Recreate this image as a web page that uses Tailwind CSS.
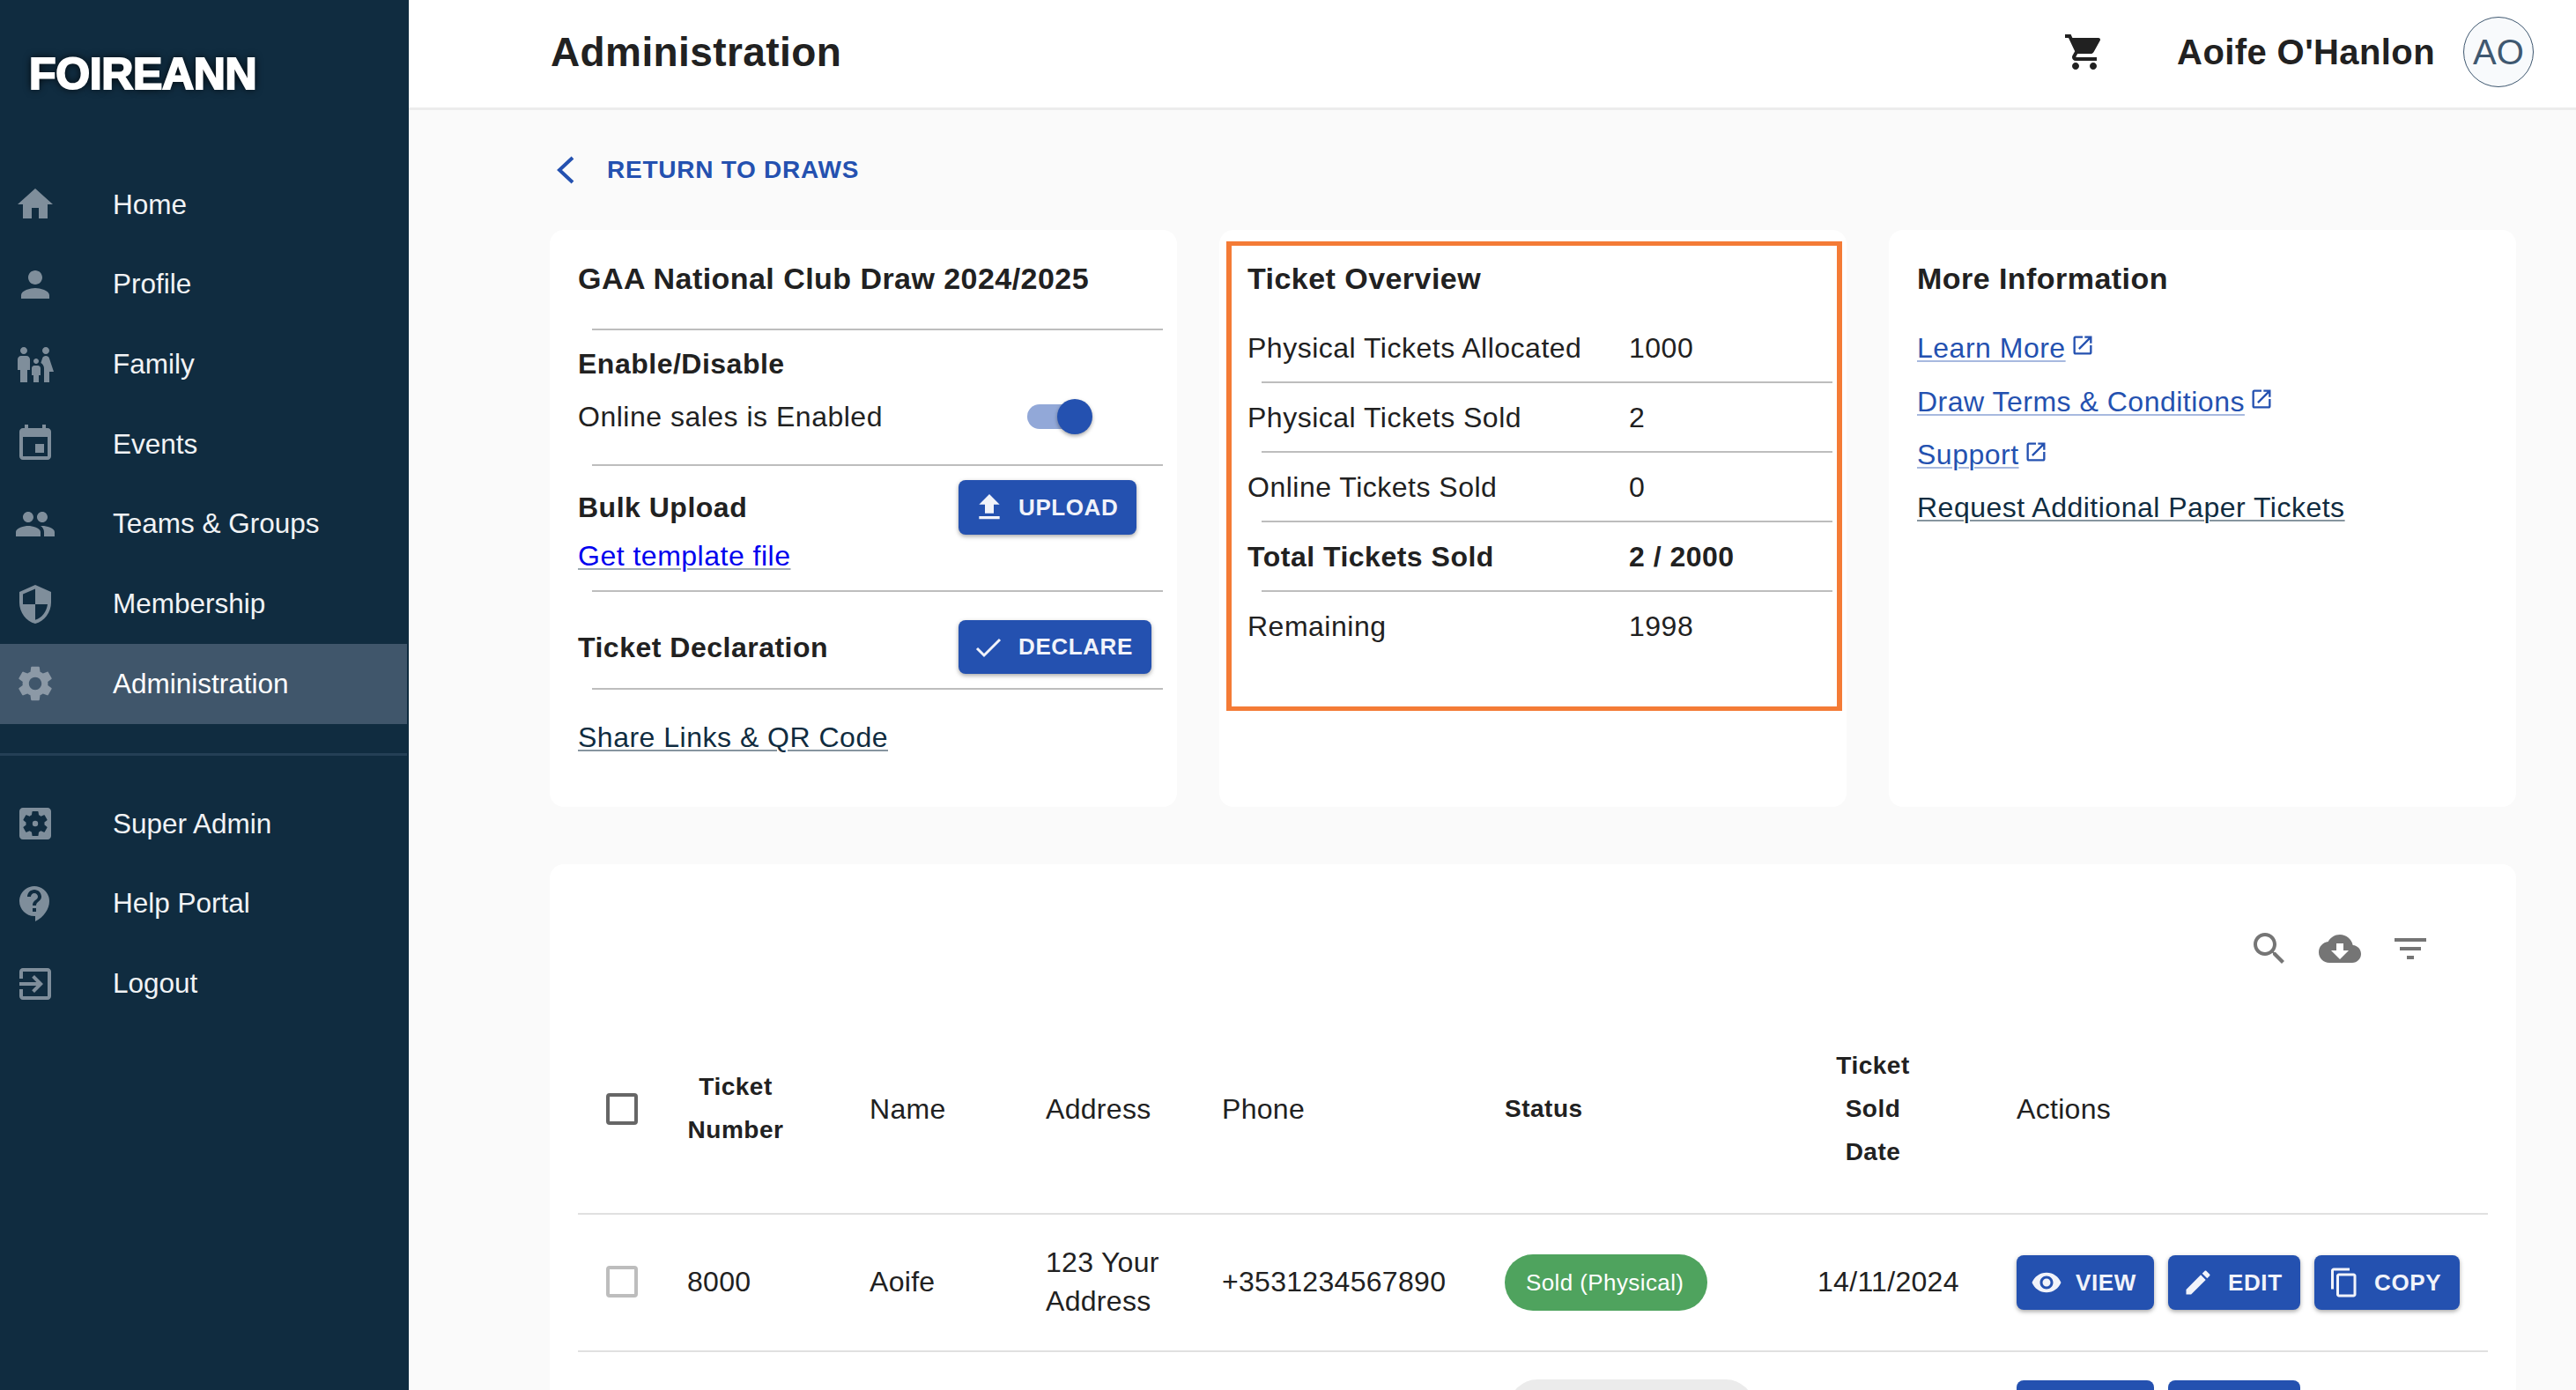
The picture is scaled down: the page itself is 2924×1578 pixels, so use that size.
<!DOCTYPE html>
<html lang="en">
<head>
  <meta charset="UTF-8" />
  <meta name="viewport" content="width=device-width, initial-scale=1.0" />
  <title>Administration</title>
  <script src="https://cdn.jsdelivr.net/npm/@tailwindcss/browser@4"></script>
</head>
<body class="flex h-screen overflow-hidden bg-[#fafafa] font-['Liberation_Sans',Arial,sans-serif] text-[#212121]">

  <!-- sidebar -->
  <aside class="w-[464px] shrink-0 bg-[#102c40] pr-[2px] text-[31.5px] text-[#f1f3f5]">
    <div class="h-[187px] pl-[33px] pt-[54px]">
      <span class="text-[50px] leading-[60px] font-bold tracking-[-0.35px] text-white [-webkit-text-stroke:2px_white] [text-shadow:0_0_10px_#000]">FOIREANN</span>
    </div>
    <nav>
      <a class="flex h-[90.67px] items-center"><svg class="ml-4 mr-16 size-12 fill-[#7f8e9b]" viewBox="0 0 24 24"><path d="M10 20v-6h4v6h5v-8h3L12 3 2 12h3v8z"/></svg>Home</a>
      <a class="flex h-[90.67px] items-center"><svg class="ml-4 mr-16 size-12 fill-[#7f8e9b]" viewBox="0 0 24 24"><path d="M12 12c2.21 0 4-1.79 4-4s-1.79-4-4-4-4 1.79-4 4 1.79 4 4 4zm0 2c-2.67 0-8 1.34-8 4v2h16v-2c0-2.66-5.33-4-8-4z"/></svg>Profile</a>
      <a class="flex h-[90.67px] items-center"><svg class="ml-4 mr-16 size-12 fill-[#7f8e9b]" viewBox="0 0 24 24"><path d="M16 4c0-1.11.89-2 2-2s2 .89 2 2-.89 2-2 2-2-.89-2-2zm4 18v-6h2.5l-2.54-7.63C19.68 7.55 18.92 7 18.06 7h-.12c-.86 0-1.63.55-1.9 1.37l-.86 2.58C16.26 11.55 17 12.68 17 14v8h3zm-7.5-10.5c.83 0 1.5-.67 1.5-1.5s-.67-1.5-1.5-1.5S11 9.17 11 10s.67 1.5 1.5 1.5zM5.5 6c1.11 0 2-.89 2-2s-.89-2-2-2-2 .89-2 2 .89 2 2 2zm2 16v-7H9V9c0-1.1-.9-2-2-2H4c-1.1 0-2 .9-2 2v6h1.5v7h4zm6.5 0v-4h1v-4c0-.82-.68-1.5-1.5-1.5h-2c-.82 0-1.5.68-1.5 1.5v4h1v4h3z"/></svg>Family</a>
      <a class="flex h-[90.67px] items-center"><svg class="ml-4 mr-16 size-12 fill-[#7f8e9b]" viewBox="0 0 24 24"><path d="M17 12h-5v5h5v-5zM16 1v2H8V1H6v2H5c-1.11 0-1.99.9-1.99 2L3 19c0 1.1.89 2 2 2h14c1.1 0 2-.9 2-2V5c0-1.1-.9-2-2-2h-1V1h-2zm3 18H5V8h14v11z"/></svg>Events</a>
      <a class="flex h-[90.67px] items-center"><svg class="ml-4 mr-16 size-12 fill-[#7f8e9b]" viewBox="0 0 24 24"><path d="M16 11c1.66 0 2.99-1.34 2.99-3S17.66 5 16 5c-1.66 0-3 1.34-3 3s1.34 3 3 3zm-8 0c1.66 0 2.99-1.34 2.99-3S9.66 5 8 5C6.34 5 5 6.34 5 8s1.34 3 3 3zm0 2c-2.33 0-7 1.17-7 3.5V19h14v-2.5c0-2.33-4.67-3.5-7-3.5zm8 0c-.29 0-.62.02-.97.05 1.16.84 1.97 1.97 1.97 3.45V19h6v-2.5c0-2.33-4.67-3.5-7-3.5z"/></svg>Teams &amp; Groups</a>
      <a class="flex h-[90.67px] items-center"><svg class="ml-4 mr-16 size-12 fill-[#7f8e9b]" viewBox="0 0 24 24"><path d="M12 1L3 5v6c0 5.55 3.84 10.74 9 12 5.16-1.26 9-6.45 9-12V5l-9-4zm0 10.99h7c-.53 4.12-3.28 7.79-7 8.94V12H5V6.3l7-3.11v8.8z"/></svg>Membership</a>
      <a class="flex h-[91px] items-center bg-[#40566b] text-white"><svg class="ml-4 mr-16 size-12 fill-[#8c99a6]" viewBox="0 0 24 24"><path d="M19.14 12.94c.04-.3.06-.61.06-.94 0-.32-.02-.64-.07-.94l2.03-1.58c.18-.14.23-.41.12-.61l-1.92-3.32c-.12-.22-.37-.29-.59-.22l-2.39.96c-.5-.38-1.03-.7-1.62-.94l-.36-2.54c-.04-.24-.24-.41-.48-.41h-3.84c-.24 0-.43.17-.47.41l-.36 2.54c-.59.24-1.13.57-1.62.94l-2.39-.96c-.22-.08-.47 0-.59.22L2.74 8.87c-.12.21-.08.47.12.61l2.03 1.58c-.05.3-.09.63-.09.94s.02.64.07.94l-2.03 1.58c-.18.14-.23.41-.12.61l1.92 3.32c.12.22.37.29.59.22l2.39-.96c.5.38 1.03.7 1.62.94l.36 2.54c.05.24.24.41.48.41h3.84c.24 0 .44-.17.47-.41l.36-2.54c.59-.24 1.13-.56 1.62-.94l2.39.96c.22.08.47 0 .59-.22l1.92-3.32c.12-.22.07-.47-.12-.61l-2.01-1.58zM12 15.6c-1.98 0-3.6-1.62-3.6-3.6s1.62-3.6 3.6-3.6 3.6 1.62 3.6 3.6-1.62 3.6-3.6 3.6z"/></svg>Administration</a>
    </nav>
    <div class="mt-[33px] mb-[32px] h-[3px] bg-[#243f55]"></div>
    <nav>
      <a class="flex h-[90.67px] items-center"><svg class="ml-4 mr-16 size-12 fill-[#7f8e9b]" viewBox="0 0 24 24"><path d="M19 3H5c-1.11 0-2 .9-2 2v14c0 1.1.89 2 2 2h14c1.11 0 2-.9 2-2V5c0-1.1-.89-2-2-2zm-1.75 9c0 .23-.02.46-.05.68l1.48 1.16c.13.11.17.3.08.45l-1.4 2.42c-.09.15-.27.21-.43.15l-1.74-.7c-.36.28-.76.51-1.18.69l-.26 1.85c-.03.17-.18.3-.35.3h-2.8c-.17 0-.32-.13-.35-.29l-.26-1.85c-.43-.18-.82-.41-1.18-.69l-1.74.7c-.16.06-.34 0-.43-.15l-1.4-2.42c-.09-.15-.05-.34.08-.45l1.48-1.16c-.03-.23-.05-.46-.05-.69 0-.23.02-.46.05-.68l-1.48-1.16c-.13-.11-.17-.3-.08-.45l1.4-2.42c.09-.15.27-.21.43-.15l1.74.7c.36-.28.76-.51 1.18-.69l.26-1.85c.03-.17.18-.3.35-.3h2.8c.17 0 .32.13.35.29l.26 1.85c.43.18.82.41 1.18.69l1.74-.7c.16-.06.34 0 .43.15l1.4 2.42c.09.15.05.34-.08.45l-1.48 1.16c.03.23.05.46.05.69z"/><circle cx="12" cy="12" r="1.6"/></svg>Super Admin</a>
      <a class="flex h-[90.67px] items-center"><svg class="ml-4 mr-16 size-12 fill-[#7f8e9b]" viewBox="0 0 24 24"><path d="M11.5 2C6.81 2 3 5.81 3 10.5 3 15.19 6.81 19 11.5 19h.5v3c4.86-2.34 8-7 8-11.5C20 5.81 16.19 2 11.5 2zm1 14.5h-2v-2h2v2zm0-3.5h-2c0-3.25 3-3 3-5 0-1.1-.9-2-2-2s-2 .9-2 2h-2c0-2.21 1.79-4 4-4s4 1.79 4 4c0 2.5-3 2.75-3 5z"/></svg>Help Portal</a>
      <a class="flex h-[90.67px] items-center"><svg class="ml-4 mr-16 size-12 fill-[#7f8e9b]" viewBox="0 0 24 24"><path d="M10.09 15.59L11.5 17l5-5-5-5-1.41 1.41L12.67 11H3v2h9.67l-2.58 2.59zM19 3H5c-1.11 0-2 .9-2 2v4h2V5h14v14H5v-4H3v4c0 1.1.89 2 2 2h14c1.1 0 2-.9 2-2V5c0-1.1-.9-2-2-2z"/></svg>Logout</a>
    </nav>
  </aside>

  <div class="min-w-0 flex-1">
    <!-- top bar -->
    <header class="flex h-[125px] items-center border-b-[3px] border-[#ececec] bg-white pb-[4px] pl-[161px] pr-[48px]">
      <h1 class="text-[46px] font-bold tracking-[0.4px]">Administration</h1>
      <svg class="ml-auto mr-[81px] size-12 fill-[#212121]" viewBox="0 0 24 24"><path d="M7 18c-1.1 0-1.99.9-1.99 2S5.9 22 7 22s2-.9 2-2-.9-2-2-2zM1 2v2h2l3.6 7.59-1.35 2.45c-.16.28-.25.61-.25.96 0 1.1.9 2 2 2h12v-2H7.42c-.14 0-.25-.11-.25-.25l.03-.12.9-1.63h7.45c.75 0 1.41-.41 1.75-1.03l3.58-6.49c.08-.14.12-.31.12-.48 0-.55-.45-1-1-1H5.21l-.94-2H1zm16 16c-1.1 0-1.99.9-1.99 2s.89 2 1.99 2 2-.9 2-2-.9-2-2-2z"/></svg>
      <span class="mr-[32px] text-[40px] font-bold tracking-[0.4px]">Aoife O'Hanlon</span>
      <div class="flex size-20 items-center justify-center rounded-full border-[1.5px] border-[#3f5870] bg-[#f8fafc] text-[40px] text-[#3f5870]">AO</div>
    </header>

    <main class="pl-[160px] pr-[68px]">
      <a class="flex h-[136px] items-center pl-[8px] text-[28px] font-bold tracking-[0.75px] text-[#2451b0]">
        <svg class="mr-[37px] h-[32px] w-[20px] fill-none stroke-[#2451b0] stroke-[4px]" viewBox="0 0 20 32"><polyline points="18,2 3,16 18,30"/></svg>
        RETURN TO DRAWS
      </a>

      <div class="flex gap-12">
        <!-- draw card -->
        <section class="h-[655px] w-[712px] rounded-2xl bg-white pl-[32px] pr-[16px] text-[32px] tracking-[0.5px]">
          <h2 class="h-[112px] pt-[35px] text-[34px] leading-[40px] font-bold tracking-[0.45px]">GAA National Club Draw 2024/2025</h2>
          <div class="ml-[16px] h-[2px] bg-[#bdbdbd]"></div>
          <h3 class="mt-[18px] leading-[40px] font-bold tracking-[0.5px]">Enable/Disable</h3>
          <div class="mt-[18px] flex h-[44px] items-center">
            <span class="w-[510px] shrink-0">Online sales is Enabled</span>
            <div class="relative h-[28px] w-[70px] rounded-full bg-[#92a8d8]">
              <div class="absolute -top-[6px] left-[34px] size-10 rounded-full bg-[#2451b0] shadow-[0_2px_4px_rgba(0,0,0,0.35)]"></div>
            </div>
          </div>
          <div class="mt-[32px] ml-[16px] h-[2px] bg-[#bdbdbd]"></div>
          <div class="flex h-[141px] justify-between pr-[30px]">
            <div class="pt-[27px]">
              <h3 class="leading-[40px] font-bold tracking-[0.5px]">Bulk Upload</h3>
              <a class="mt-[15px] block leading-[40px] text-[#0000ee] underline decoration-[#102c40]/40 decoration-2 underline-offset-[3px]">Get template file</a>
            </div>
            <button class="mt-[16px] flex h-[62px] w-[202px] items-center gap-[13px] rounded-lg bg-[#2451b0] pl-[15px] text-[26px] font-bold tracking-[0.6px] text-[#f1f3fa] shadow-[0_2px_5px_rgba(0,0,0,0.35)]">
              <svg class="size-10 fill-[#f1f3fa]" viewBox="0 0 24 24"><path d="M9 16h6v-6h4l-7-7-7 7h4zm-4 2h14v2H5z"/></svg>UPLOAD
            </button>
          </div>
          <div class="ml-[16px] h-[2px] bg-[#bdbdbd]"></div>
          <div class="mt-[32px] mb-[16px] flex h-[61px] items-center justify-between pr-[13px]">
            <h3 class="font-bold tracking-[0.5px]">Ticket Declaration</h3>
            <button class="flex h-[61px] w-[219px] items-center gap-[13px] rounded-lg bg-[#2451b0] pl-[15px] text-[26px] font-bold tracking-[0.6px] text-[#f1f3fa] shadow-[0_2px_5px_rgba(0,0,0,0.35)]">
              <svg class="size-10 fill-none stroke-[#f1f3fa] stroke-[3px]" viewBox="0 0 40 40"><polyline points="6,21 14,29 32,11"/></svg>DECLARE
            </button>
          </div>
          <div class="ml-[16px] h-[2px] bg-[#bdbdbd]"></div>
          <a class="mt-[34px] block leading-[40px] text-[#102c40] underline decoration-[#102c40]/50 decoration-2 underline-offset-[3px]">Share Links &amp; QR Code</a>
        </section>

        <!-- ticket overview, orange box sits over the card -->
        <section class="relative h-[655px] w-[712px] rounded-2xl bg-white pl-[32px] pr-[16px] text-[32px] tracking-[0.5px]">
          <div class="pointer-events-none absolute left-[8px] top-[13px] h-[533px] w-[699px] border-x-[6px] border-y-[5px] border-[#f47b36]"></div>
          <h2 class="h-[95px] pt-[35px] text-[34px] leading-[40px] font-bold tracking-[0.45px]">Ticket Overview</h2>
          <div class="flex h-[77px] items-center"><span class="w-[433px]">Physical Tickets Allocated</span><span>1000</span></div>
          <div class="ml-[16px] h-[2px] bg-[#bdbdbd]"></div>
          <div class="flex h-[77px] items-center"><span class="w-[433px]">Physical Tickets Sold</span><span>2</span></div>
          <div class="ml-[16px] h-[2px] bg-[#bdbdbd]"></div>
          <div class="flex h-[77px] items-center"><span class="w-[433px]">Online Tickets Sold</span><span>0</span></div>
          <div class="ml-[16px] h-[2px] bg-[#bdbdbd]"></div>
          <div class="flex h-[77px] items-center font-bold"><span class="w-[433px]">Total Tickets Sold</span><span>2 / 2000</span></div>
          <div class="ml-[16px] h-[2px] bg-[#bdbdbd]"></div>
          <div class="flex h-[77px] items-center"><span class="w-[433px]">Remaining</span><span>1998</span></div>
        </section>

        <!-- more information -->
        <section class="h-[655px] w-[712px] rounded-2xl bg-white pl-[32px] pr-[16px] text-[32px] tracking-[0.5px] text-[#2451b0]">
          <h2 class="h-[104px] pt-[35px] text-[34px] leading-[40px] font-bold tracking-[0.45px] text-[#212121]">More Information</h2>
          <div class="flex h-[60.4px] items-center gap-[5px]"><a class="underline decoration-[#2451b0]/40 decoration-2 underline-offset-[3px]">Learn More</a><svg class="-mt-[6px] size-7 fill-[#2451b0]" viewBox="0 0 24 24"><path d="M19 19H5V5h7V3H5c-1.11 0-2 .9-2 2v14c0 1.1.89 2 2 2h14c1.1 0 2-.9 2-2v-7h-2v7zM14 3v2h3.59l-9.83 9.83 1.41 1.41L19 6.41V10h2V3h-7z"/></svg></div>
          <div class="flex h-[60.4px] items-center gap-[5px]"><a class="underline decoration-[#2451b0]/40 decoration-2 underline-offset-[3px]">Draw Terms &amp; Conditions</a><svg class="-mt-[6px] size-7 fill-[#2451b0]" viewBox="0 0 24 24"><path d="M19 19H5V5h7V3H5c-1.11 0-2 .9-2 2v14c0 1.1.89 2 2 2h14c1.1 0 2-.9 2-2v-7h-2v7zM14 3v2h3.59l-9.83 9.83 1.41 1.41L19 6.41V10h2V3h-7z"/></svg></div>
          <div class="flex h-[60.4px] items-center gap-[5px]"><a class="underline decoration-[#2451b0]/40 decoration-2 underline-offset-[3px]">Support</a><svg class="-mt-[6px] size-7 fill-[#2451b0]" viewBox="0 0 24 24"><path d="M19 19H5V5h7V3H5c-1.11 0-2 .9-2 2v14c0 1.1.89 2 2 2h14c1.1 0 2-.9 2-2v-7h-2v7zM14 3v2h3.59l-9.83 9.83 1.41 1.41L19 6.41V10h2V3h-7z"/></svg></div>
          <div class="flex h-[60.4px] items-center"><a class="text-[#102c40] underline decoration-[#102c40]/50 decoration-2 underline-offset-[3px]">Request Additional Paper Tickets</a></div>
        </section>
      </div>

      <!-- tickets table -->
      <section class="mt-[65px] rounded-t-2xl bg-white pl-[32px] pt-[56px]">
        <div class="flex h-[80px] justify-end pr-[80px]">
          <div class="flex size-20 items-center justify-center"><svg class="size-12 fill-[#757575]" viewBox="0 0 24 24"><path d="M15.5 14h-.79l-.28-.27C15.41 12.59 16 11.11 16 9.5 16 5.91 13.09 3 9.5 3S3 5.91 3 9.5 5.91 16 9.5 16c1.61 0 3.09-.59 4.23-1.57l.27.28v.79l5 4.99L20.49 19l-4.99-5zm-6 0C7.01 14 5 11.99 5 9.5S7.01 5 9.5 5 14 7.01 14 9.5 11.99 14 9.5 14z"/></svg></div>
          <div class="flex size-20 items-center justify-center"><svg class="size-12 fill-[#757575]" viewBox="0 0 24 24"><path d="M19.35 10.04C18.67 6.59 15.64 4 12 4 9.11 4 6.6 5.64 5.35 8.04 2.34 8.36 0 10.91 0 14c0 3.31 2.69 6 6 6h13c2.76 0 5-2.24 5-5 0-2.64-2.05-4.78-4.65-4.96zM17 13l-5 5-5-5h3V9h4v4h3z"/></svg></div>
          <div class="flex size-20 items-center justify-center"><svg class="size-12 fill-[#757575]" viewBox="0 0 24 24"><path d="M10 18h4v-2h-4v2zM3 6v2h18V6H3zm3 7h12v-2H6v2z"/></svg></div>
        </div>
        <table class="mt-[22px] w-[2168px] table-fixed border-collapse text-left text-[32px] tracking-[0.3px]">
          <colgroup>
            <col class="w-[124px]" /><col class="w-[207px]" /><col class="w-[200px]" /><col class="w-[200px]" /><col class="w-[321px]" /><col class="w-[355px]" /><col class="w-[226px]" /><col class="w-[535px]" />
          </colgroup>
          <thead>
            <tr class="h-[239px] border-b-2 border-[#e0e0e0]">
              <th class="pl-[32px] pt-[2px] font-normal"><div class="size-[36px] rounded-[4px] border-[4px] border-[#666]"></div></th>
              <th><div class="w-[110px] text-center text-[28px] leading-[49px] font-bold tracking-[0.5px]">Ticket<br />Number</div></th>
              <th class="pt-[2px] font-normal">Name</th>
              <th class="pt-[2px] font-normal">Address</th>
              <th class="pt-[2px] font-normal">Phone</th>
              <th class="pt-[2px] text-[28px] font-bold tracking-[0.5px]">Status</th>
              <th><div class="w-[126px] text-center text-[28px] leading-[49px] font-bold tracking-[0.5px]">Ticket<br />Sold<br />Date</div></th>
              <th class="pt-[2px] font-normal">Actions</th>
            </tr>
          </thead>
          <tbody>
            <tr class="h-[156px] border-b-2 border-[#e0e0e0]">
              <td class="pb-[2px] pl-[32px]"><div class="size-[36px] rounded-[4px] border-[4px] border-[#bdbdbd]"></div></td>
              <td class="pb-[2px]">8000</td>
              <td class="pb-[2px]">Aoife</td>
              <td class="pb-[2px] leading-[44px]">123 Your<br />Address</td>
              <td class="pb-[2px]">+3531234567890</td>
              <td><span class="inline-flex h-[64px] w-[230px] items-center rounded-full bg-[#4fa35e] pl-[24px] text-[26px] tracking-[0.4px] text-white">Sold (Physical)</span></td>
              <td class="pb-[2px]">14/11/2024</td>
              <td>
                <div class="flex gap-4 text-[26px] font-bold tracking-[0.6px] text-[#f1f3fa]">
                  <button class="flex h-[62px] w-[156px] items-center gap-[15px] rounded-lg bg-[#2451b0] pl-4 shadow-[0_2px_5px_rgba(0,0,0,0.35)]"><svg class="size-9 fill-[#f1f3fa]" viewBox="0 0 24 24"><path d="M12 4.5C7 4.5 2.73 7.61 1 12c1.73 4.39 6 7.5 11 7.5s9.27-3.11 11-7.5c-1.73-4.39-6-7.5-11-7.5zM12 17c-2.76 0-5-2.24-5-5s2.24-5 5-5 5 2.24 5 5-2.24 5-5 5zm0-8c-1.66 0-3 1.34-3 3s1.34 3 3 3 3-1.34 3-3-1.34-3-3-3z"/></svg>VIEW</button>
                  <button class="flex h-[62px] w-[150px] items-center gap-4 rounded-lg bg-[#2451b0] pl-4 shadow-[0_2px_5px_rgba(0,0,0,0.35)]"><svg class="size-9 fill-[#f1f3fa]" viewBox="0 0 24 24"><path d="M3 17.25V21h3.75L17.81 9.94l-3.75-3.75L3 17.25zM20.71 7.04c.39-.39.39-1.02 0-1.41l-2.34-2.34c-.39-.39-1.02-.39-1.41 0l-1.83 1.83 3.75 3.75 1.83-1.83z"/></svg>EDIT</button>
                  <button class="flex h-[62px] w-[165px] items-center gap-4 rounded-lg bg-[#2451b0] pl-4 shadow-[0_2px_5px_rgba(0,0,0,0.35)]"><svg class="size-9 fill-[#f1f3fa]" viewBox="0 0 24 24"><path d="M16 1H4c-1.1 0-2 .9-2 2v14c0 0 0 0 0 0h2V3h12V1zm3 4H8c-1.1 0-2 .9-2 2v14c0 1.1.9 2 2 2h11c1.1 0 2-.9 2-2V7c0-1.1-.9-2-2-2zm0 16H8V7h11v14z"/></svg>COPY</button>
                </div>
              </td>
            </tr>
            <tr class="h-[126px]">
              <td></td><td></td><td></td><td></td><td></td>
              <td><span class="ml-[5px] inline-block h-[64px] w-[278px] rounded-full bg-[#ebebeb] align-middle"></span></td>
              <td></td>
              <td>
                <div class="flex gap-4">
                  <button class="h-[62px] w-[156px] rounded-lg bg-[#2451b0]"></button>
                  <button class="h-[62px] w-[150px] rounded-lg bg-[#2451b0]"></button>
                </div>
              </td>
            </tr>
          </tbody>
        </table>
      </section>
    </main>
  </div>
</body>
</html>
